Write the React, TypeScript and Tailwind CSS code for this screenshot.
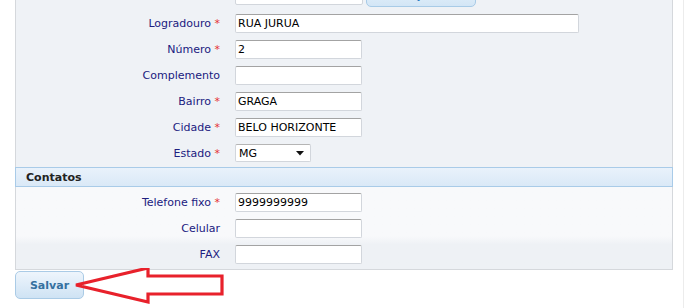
import React from 'react';

const font = { fontFamily: '"DejaVu Sans", Verdana, sans-serif' };

type Row = { label: string; req?: boolean; value?: string; wide?: boolean };

const enderecoRows: Row[] = [
  { label: 'Logradouro', req: true, value: 'RUA JURUA', wide: true },
  { label: 'Número', req: true, value: '2' },
  { label: 'Complemento' },
  { label: 'Bairro', req: true, value: 'GRAGA' },
  { label: 'Cidade', req: true, value: 'BELO HORIZONTE' },
];

const contatoRows: Row[] = [
  { label: 'Telefone fixo', req: true, value: '9999999999' },
  { label: 'Celular' },
  { label: 'FAX' },
];

const Label: React.FC<{ row: Row }> = ({ row }) => (
  <span className="w-[204px] shrink-0 text-right text-[11px] text-[#20207f] leading-none">
    {row.label}
    {row.req && <span className="text-[#e53333]"> *</span>}
  </span>
);

const TextInput: React.FC<{ value?: string; wide?: boolean }> = ({ value, wide }) => (
  <div
    className={`h-[19px] ${wide ? 'w-[344px]' : 'w-[127px]'} bg-white border border-[#d2d6dc] border-t-[#a3a3a3] rounded-[2px] px-[2px] flex items-center text-[11px] text-black leading-none`}
  >
    {value}
  </div>
);

const FieldRow: React.FC<{ row: Row }> = ({ row }) => (
  <div className="flex items-center gap-[15px]">
    <Label row={row} />
    <TextInput value={row.value} wide={row.wide} />
  </div>
);

export default function App() {
  return (
    <div className="relative w-[689px] h-[308px] bg-white overflow-hidden" style={font}>
      <div className="absolute top-0 bottom-0 left-[683px] w-px bg-[#ececec]" />
      <div className="ml-[15px] w-[658px] border border-t-0 border-[#d5d8dc]">
        {/* Endereço */}
        <div className="bg-[#eff2f6] pb-[5px] flex flex-col gap-[7px]">
          <div className="flex items-center gap-[3px] mt-[-17px] h-[24px] pl-[219px]">
            <div className="h-[19px] w-[128px] bg-white border border-[#d2d6dc] rounded-[2px]" />
            <div className="h-[24px] w-[110px] rounded-[5px] border border-[#a8cbe7] bg-gradient-to-b from-[#eaf3fb] to-[#d3e6f6] flex items-center justify-center text-[11px] font-bold text-[#2f7ec4] leading-none">
              Pesquisar
            </div>
          </div>
          {enderecoRows.map((r) => (
            <FieldRow key={r.label} row={r} />
          ))}
          <div className="flex items-center gap-[15px]">
            <Label row={{ label: 'Estado', req: true }} />
            <div className="h-[18px] w-[76px] bg-white border border-[#d2d6dc] border-t-[#b5b5b5] rounded-[2px] pl-[3px] pr-[6px] flex items-center justify-between text-[11px] text-black leading-none">
              <span>MG</span>
              <svg width="8" height="5" viewBox="0 0 8 5">
                <path d="M0 0 L8 0 L4 4.5 Z" fill="#111" />
              </svg>
            </div>
          </div>
        </div>

        {/* Contatos */}
        <div className="h-[20px] border border-[#a9cbe8] bg-gradient-to-b from-[#e9f2fb] to-[#dae9f7] flex items-center pl-[10px] text-[11px] font-bold text-[#222] leading-none -mx-px">
          Contatos
        </div>
        <div className="bg-gradient-to-b from-[#f8f9fb] from-60% to-[#eef1f5] to-70% pt-[6px] pb-[5px] flex flex-col gap-[7px]">
          {contatoRows.map((r) => (
            <FieldRow key={r.label} row={r} />
          ))}
        </div>
      </div>

      {/* Salvar + seta */}
      <div className="relative">
        <div className="ml-[15px] mt-px h-[28px] w-[69px] rounded-[5px] border border-[#aacbe6] bg-gradient-to-b from-[#eef5fc] to-[#cfe3f4] flex items-center justify-center text-[11px] font-bold text-[#35709f] leading-none">
          Salvar
        </div>
        <svg className="absolute left-0 top-[-3px]" width="240" height="40" viewBox="0 0 240 40">
          <path
            d="M76 17 L148 0 L148 8 L222 8 L222 26 L148 26 L148 34 Z"
            fill="none"
            stroke="#e8212b"
            strokeWidth="3.2"
            strokeLinejoin="miter"
          />
        </svg>
      </div>
    </div>
  );
}
